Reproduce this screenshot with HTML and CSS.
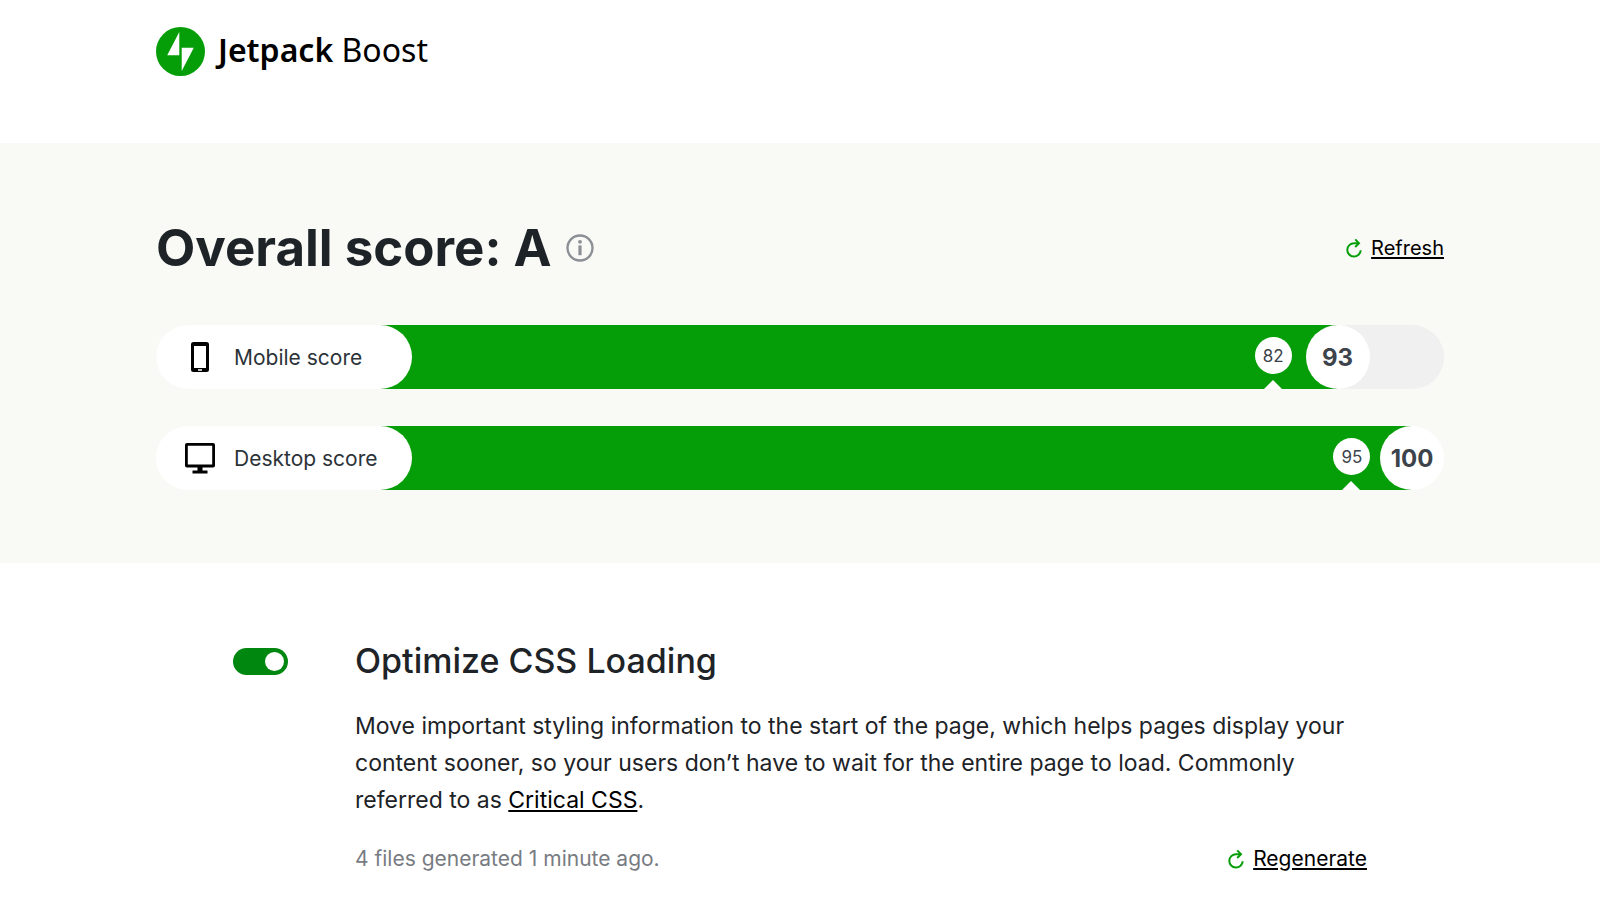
FILE: index.html
```html
<!DOCTYPE html>
<html lang="en">

<head>
  <meta charset="UTF-8">
  <meta name="viewport" content="width=device-width, initial-scale=1.0">
  <title>Jetpack Boost</title>
  <link rel="stylesheet" href="styles.css">
</head>

<body>

  <header class="header">
    <div class="container logo">
      <svg class="logo-icon" viewBox="0 0 48 48" aria-hidden="true">
        <circle cx="24" cy="24" r="24" fill="#069e08" />
        <path d="M22.8 4.8v22.9H11zM25.2 43.2V20.3H37z" fill="#fff" />
      </svg>
      <span class="logo-text"><strong>Jetpack</strong> Boost</span>
    </div>
  </header>

  <main>
    <section class="scores">
      <div class="container">
        <div class="scores-top">
          <h1>Overall score: A</h1>
          <button class="info" type="button" aria-label="About the score">
            <svg viewBox="0 0 28 28" aria-hidden="true">
              <circle cx="14" cy="14" r="12.5" fill="none" stroke="#8c8f94" stroke-width="2.4" />
              <circle cx="14" cy="7.8" r="1.9" fill="#8c8f94" />
              <path d="M12.4 11.4h3.2v9.8h-3.2z" fill="#8c8f94" />
            </svg>
          </button>
          <button class="action" type="button">
            <svg viewBox="0 0 16 20" aria-hidden="true">
              <path d="M12.5 5.2H8a6.700 6.700 0 1 0 6.700 7" />
              <path d="M9.200 1.400l3.800 3.800-3.800 3.800" />
            </svg>
            <span>Refresh</span>
          </button>
        </div>

        <div class="score-bar">
          <div class="score-label">
            <svg viewBox="0 0 32 32" aria-hidden="true">
              <path fill-rule="evenodd" d="M9.500 1h13A2.500 2.500 0 0 1 25 3.500v25a2.500 2.500 0 0 1-2.500 2.500h-13A2.500 2.500 0 0 1 7 28.500v-25A2.500 2.500 0 0 1 9.500 1zM10 5v22h12V5zM14 28.200v1.600h4v-1.600z" />
            </svg>
            <span>Mobile score</span>
          </div>
          <div class="track">
            <div class="fill" style="width: 93%">
              <div class="score">93</div>
            </div>
            <div class="previous" style="left: 84%">82</div>
          </div>
        </div>

        <div class="score-bar">
          <div class="score-label">
            <svg viewBox="0 0 32 32" aria-hidden="true">
              <path fill-rule="evenodd" d="M3 1h26a2 2 0 0 1 2 2v20.500a2 2 0 0 1-2 2H18.500V28.500H23.500V31.500H8.500V28.500H13.500V25.500H3a2 2 0 0 1-2-2V3a2 2 0 0 1 2-2zM3.800 3.800v18.800h24.400V3.800z" />
            </svg>
            <span>Desktop score</span>
          </div>
          <div class="track">
            <div class="fill" style="width: 100%">
              <div class="score">100</div>
            </div>
            <div class="previous" style="left: 91.4%">95</div>
          </div>
        </div>
      </div>
    </section>

    <section class="container">
      <div class="module">
        <input class="toggle" id="critical-css" type="checkbox" checked>
        <div class="module-body">
          <h2><label for="critical-css">Optimize CSS Loading</label></h2>
          <p>Move important styling information to the start of the page, which helps pages display your content sooner, so your users don’t have to wait for the entire page to load. Commonly referred to as <a href="#">Critical CSS</a>.</p>
          <div class="meta">
            <span>4 files generated 1 minute ago.</span>
            <button class="action action-large" type="button">
              <svg viewBox="0 0 16 20" aria-hidden="true">
                <path d="M12.5 5.2H8a6.700 6.700 0 1 0 6.700 7" />
                <path d="M9.200 1.400l3.800 3.800-3.800 3.800" />
              </svg>
              <span>Regenerate</span>
            </button>
          </div>
        </div>
      </div>
    </section>
  </main>

</body>

</html>
```
FILE: styles.css
```css
* {
  box-sizing: border-box;
}

body {
  margin: 0;
  background-color: #fff;
  color: #1d2327;
  font-family: Inter, "Liberation Sans", sans-serif;
}

h1,
h2,
p {
  margin: 0;
}

.container {
  max-width: 1336px;
  margin: 0 auto;
  padding: 0 24px;
}

.header {
  padding: 27px 0 67px;
}

.logo {
  display: flex;
  align-items: center;
  gap: 13px;
}

.logo-icon {
  width: 49px;
  height: 49px;
}

.logo-text {
  padding-bottom: 4px;
  font-family: "Noto Sans", "Open Sans", sans-serif;
  font-size: 32px;
  font-weight: 400;
  line-height: 44px;
  color: #000;
}

.logo-text strong {
  font-weight: 600;
}

.scores {
  padding: 73px 0;
  background-color: #f9f9f6;
}

.scores-top {
  display: flex;
  align-items: center;
  margin-bottom: 45px;
}

h1 {
  font-size: 51px;
  font-weight: 700;
  line-height: 64px;
}

button {
  padding: 0;
  border: none;
  background: none;
  font-family: inherit;
  cursor: pointer;
}

.info {
  margin-left: 14px;
}

.info svg {
  display: block;
  width: 28px;
  height: 28px;
}

.action {
  display: flex;
  align-items: center;
  gap: 9px;
  margin-left: auto;
  font-size: 20px;
  line-height: 32px;
  color: #000;
}

.action-large {
  font-size: 21px;
}

.action svg {
  width: 16px;
  height: 20px;
  fill: none;
  stroke: #069e08;
  stroke-width: 2;
}

.action span,
p a {
  color: #000;
  text-decoration: underline;
  text-decoration-thickness: 2px;
  text-underline-offset: 2px;
}

.score-bar {
  display: flex;
  height: 64px;
  border-radius: 32px;
  background-color: #f0f0f0;
}

.score-bar + .score-bar {
  margin-top: 37px;
}

.score-label {
  z-index: 1;
  display: flex;
  align-items: center;
  gap: 18px;
  width: 256px;
  padding-left: 28px;
  border-radius: 32px;
  background-color: #fff;
  font-size: 21px;
  color: #2c3338;
}

.score-label svg {
  width: 32px;
  height: 32px;
  fill: #000;
}

.track {
  position: relative;
  flex: 1;
  margin-left: -32px;
}

/* the green stops at the middle of the score circle */
.fill {
  display: flex;
  justify-content: flex-end;
  height: 64px;
  background: linear-gradient(to left, transparent 32px, #069e08 32px);
}

.score {
  width: 64px;
  border-radius: 50%;
  background-color: #fff;
  font-size: 24px;
  font-weight: 700;
  line-height: 66px;
  text-align: center;
  color: #3c434a;
}

.score-bar:last-child {
  background-color: transparent;
}

.previous {
  position: absolute;
  top: 12px;
  width: 37px;
  height: 37px;
  margin-left: -19px;
  border-radius: 50%;
  background-color: #fff;
  font-size: 17px;
  line-height: 38px;
  text-align: center;
  color: #3c434a;
}

/* pointer at the bottom edge of the bar */
.previous::after {
  content: "";
  position: absolute;
  top: 43px;
  left: 9px;
  border: 9px solid transparent;
  border-top: none;
  border-bottom-color: #fff;
}

.module {
  display: flex;
  gap: 67px;
  padding: 74px 77px 40px;
}

.toggle {
  appearance: none;
  flex: none;
  display: flex;
  justify-content: flex-end;
  width: 55px;
  height: 27px;
  margin: 11px 0 0;
  padding: 4px;
  border-radius: 14px;
  background-color: #008710;
  cursor: pointer;
}

.toggle::before {
  content: "";
  width: 19px;
  height: 19px;
  border-radius: 50%;
  background-color: #fff;
}

.toggle:not(:checked) {
  justify-content: flex-start;
  background-color: #8c8f94;
}

.module-body {
  flex: 1;
}

h2 {
  margin-bottom: 23px;
  font-size: 34px;
  font-weight: 500;
  line-height: 48px;
}

p {
  margin-bottom: 24px;
  font-size: 23px;
  line-height: 37px;
}

.meta {
  display: flex;
  align-items: center;
  font-size: 21px;
  line-height: 32px;
  color: #787c82;
}
```
